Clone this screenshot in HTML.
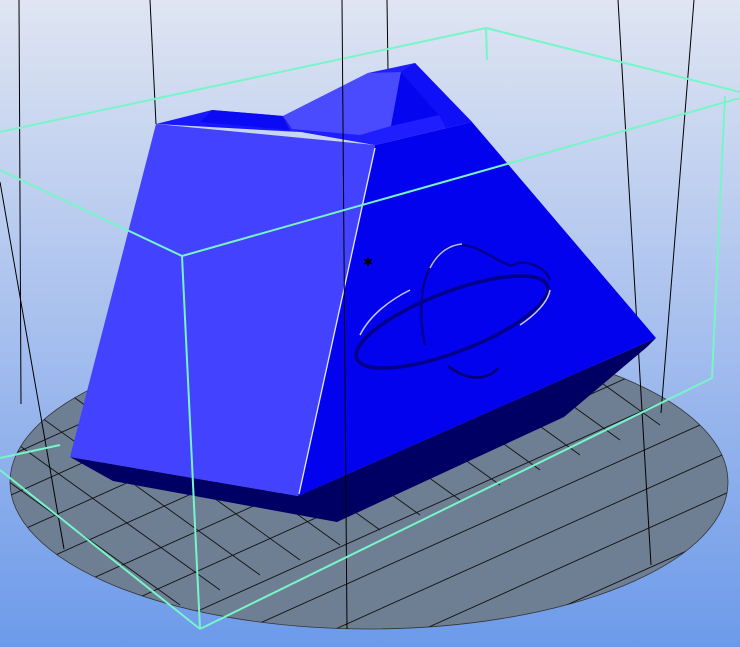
<!DOCTYPE html>
<html><head><style>html,body{margin:0;padding:0;width:740px;height:647px;overflow:hidden}svg{display:block}</style></head>
<body>
<svg width="740" height="647" viewBox="0 0 740 647" xmlns="http://www.w3.org/2000/svg">
<defs>
<linearGradient id="bg" x1="0" y1="0" x2="0" y2="1">
<stop offset="0" stop-color="#dfe5f2"/><stop offset="0.5" stop-color="#a8c0ee"/><stop offset="1" stop-color="#6c9aea"/>
</linearGradient>
<clipPath id="bed"><ellipse cx="369" cy="482" rx="359" ry="147"/></clipPath>
</defs>
<rect width="740" height="647" fill="url(#bg)"/>
<ellipse cx="369" cy="482" rx="359" ry="147" fill="#6e7f93" stroke="#333" stroke-width="0.8"/>
<g clip-path="url(#bed)" stroke="#111" stroke-width="0.9">
<line x1="-200" y1="200" x2="300" y2="560"/><line x1="-160" y1="185" x2="340" y2="545"/>
<line x1="-120" y1="170" x2="380" y2="530"/><line x1="-80" y1="155" x2="420" y2="515"/>
<line x1="-40" y1="140" x2="460" y2="500"/><line x1="0" y1="125" x2="500" y2="485"/>
<line x1="40" y1="110" x2="540" y2="470"/><line x1="80" y1="95" x2="580" y2="455"/>
<line x1="120" y1="80" x2="620" y2="440"/><line x1="160" y1="65" x2="660" y2="425"/>
<line x1="200" y1="50" x2="700" y2="410"/><line x1="240" y1="35" x2="740" y2="395"/>
<line x1="280" y1="20" x2="780" y2="380"/><line x1="320" y1="5" x2="820" y2="365"/>
<line x1="-240" y1="215" x2="260" y2="575"/>
<line x1="-280" y1="230" x2="220" y2="590"/><line x1="-320" y1="245" x2="180" y2="605"/>
<line x1="-360" y1="260" x2="140" y2="620"/><line x1="-400" y1="275" x2="100" y2="635"/>
<line x1="0" y1="580" x2="800" y2="220"/><line x1="0" y1="540" x2="800" y2="180"/>
<line x1="0" y1="500" x2="800" y2="140"/><line x1="0" y1="460" x2="800" y2="100"/>
<line x1="0" y1="420" x2="800" y2="60"/><line x1="0" y1="620" x2="800" y2="260"/>
<line x1="0" y1="660" x2="800" y2="300"/><line x1="0" y1="700" x2="800" y2="340"/>
<line x1="0" y1="740" x2="800" y2="380"/><line x1="0" y1="780" x2="800" y2="420"/>
<line x1="0" y1="820" x2="800" y2="460"/><line x1="0" y1="860" x2="800" y2="500"/>
</g>
<g stroke="#000" stroke-width="1">
<line x1="19" y1="0" x2="21" y2="404"/><line x1="150" y1="0" x2="156" y2="124"/>
<line x1="387" y1="0" x2="388" y2="70"/>
<line x1="618" y1="0" x2="651" y2="565"/><line x1="694" y1="0" x2="661" y2="413"/>
<line x1="0" y1="182" x2="64" y2="549"/>
</g>
<g stroke="#78f5c8" stroke-width="2" fill="none">
<line x1="0" y1="132" x2="486" y2="28"/><line x1="486" y1="28" x2="740" y2="92"/>
<line x1="0" y1="458" x2="60" y2="445"/>
</g>
<!-- object -->
<polygon points="70,457 113,481 337,522 564,417 647,347 656,338 298,496" fill="#000064"/>
<polygon points="375,145 472,122 656,338 298,496" fill="#0202ee"/>
<polygon points="156,124 375,145 298,496 70,457" fill="#4242ff"/>
<polygon points="156,124 212,110 283,116 290,130 375,145 368,138 300,132" fill="#1818ff"/>
<polygon points="212,110 283,116 290,130 200,122" fill="#0a0af5"/>
<polygon points="283,116 368,73 415,63 472,122 375,145 290,130" fill="#1e1eff"/>
<polygon points="283,116 368,73 401,72 391,126 360,135 292,129" fill="#4a4aff"/>
<polygon points="401,72 391,126 439,115" fill="#0505f0"/>
<polygon points="415,63 472,122 446,128 439,115 401,72" fill="#1010f8"/>
<line x1="375" y1="148" x2="299" y2="494" stroke="#e8e8ff" stroke-width="1.3"/>
<!-- saturn -->
<g fill="none">
<path d="M425 345 C415 300 425 255 452 246 C475 240 495 262 512 266" stroke="#000090" stroke-width="2.5"/>
<path d="M430 268 C438 252 450 245 462 244" stroke="#b8b8ff" stroke-width="1.5"/>
<path d="M512 266 C520 258 545 265 550 280" stroke="#000090" stroke-width="2.5"/>
<ellipse cx="452" cy="322" rx="102" ry="30" transform="rotate(-21 452 322)" stroke="#000088" stroke-width="3.5"/>
<path d="M360 335 C370 315 390 300 410 290" stroke="#c8c8ff" stroke-width="1.5"/>
<path d="M520 325 C535 315 548 302 550 290" stroke="#c8c8ff" stroke-width="1.5"/>
<path d="M448 366 C468 382 488 380 498 368" stroke="#000070" stroke-width="2.5"/>
</g>
<text x="363" y="266" font-family="Liberation Sans, sans-serif" font-size="12" fill="#000">✱</text>
<line x1="342" y1="0" x2="347" y2="629" stroke="#000" stroke-width="1"/>
<g stroke="#78f5c8" stroke-width="2" fill="none">
<line x1="0" y1="170" x2="182" y2="256"/><line x1="182" y1="256" x2="740" y2="98"/>
<line x1="182" y1="256" x2="200" y2="629"/><line x1="200" y1="629" x2="0" y2="470"/>
<line x1="200" y1="629" x2="712" y2="378"/><line x1="725" y1="96" x2="712" y2="378"/>
<line x1="486" y1="28" x2="487" y2="60"/>
</g>
</svg>
</body></html>
